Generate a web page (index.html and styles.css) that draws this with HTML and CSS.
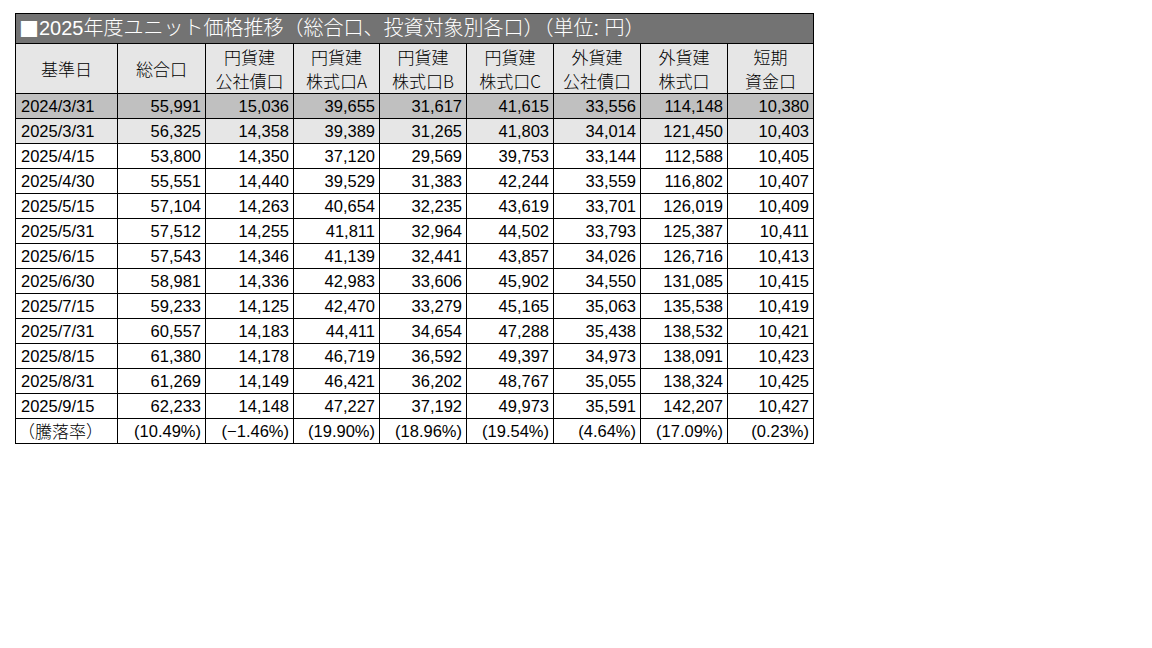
FILE: index.html
```html
<!DOCTYPE html>
<html lang="ja">
<head>
<meta charset="utf-8">
<title>2025年度ユニット価格推移</title>
<link rel="stylesheet" href="styles.css">
</head>
<body>
<div class="wrap">
<table class="tbl">
<colgroup>
<col class="c1"><col class="c2"><col class="c3"><col class="c4"><col class="c5"><col class="c6"><col class="c7"><col class="c8"><col class="c9">
</colgroup>
<thead>
<tr class="title-row"><th colspan="9" class="title"><span class="sq">■</span>2025年度ユニット価格推移（総合口、投資対象別各口）（単位: 円）</th></tr>
<tr class="head-row">
<th>基準日</th><th>総合口</th><th>円貨建<br>公社債口</th><th>円貨建<br>株式口A</th><th>円貨建<br>株式口B</th><th>円貨建<br>株式口C</th><th>外貨建<br>公社債口</th><th>外貨建<br>株式口</th><th>短期<br>資金口</th>
</tr>
</thead>
<tbody>
<tr class="base"><td class="d">2024/3/31</td><td>55,991</td><td>15,036</td><td>39,655</td><td>31,617</td><td>41,615</td><td>33,556</td><td>114,148</td><td>10,380</td></tr>
<tr class="prev"><td class="d">2025/3/31</td><td>56,325</td><td>14,358</td><td>39,389</td><td>31,265</td><td>41,803</td><td>34,014</td><td>121,450</td><td>10,403</td></tr>
<tr><td class="d">2025/4/15</td><td>53,800</td><td>14,350</td><td>37,120</td><td>29,569</td><td>39,753</td><td>33,144</td><td>112,588</td><td>10,405</td></tr>
<tr><td class="d">2025/4/30</td><td>55,551</td><td>14,440</td><td>39,529</td><td>31,383</td><td>42,244</td><td>33,559</td><td>116,802</td><td>10,407</td></tr>
<tr><td class="d">2025/5/15</td><td>57,104</td><td>14,263</td><td>40,654</td><td>32,235</td><td>43,619</td><td>33,701</td><td>126,019</td><td>10,409</td></tr>
<tr><td class="d">2025/5/31</td><td>57,512</td><td>14,255</td><td>41,811</td><td>32,964</td><td>44,502</td><td>33,793</td><td>125,387</td><td>10,411</td></tr>
<tr><td class="d">2025/6/15</td><td>57,543</td><td>14,346</td><td>41,139</td><td>32,441</td><td>43,857</td><td>34,026</td><td>126,716</td><td>10,413</td></tr>
<tr><td class="d">2025/6/30</td><td>58,981</td><td>14,336</td><td>42,983</td><td>33,606</td><td>45,902</td><td>34,550</td><td>131,085</td><td>10,415</td></tr>
<tr><td class="d">2025/7/15</td><td>59,233</td><td>14,125</td><td>42,470</td><td>33,279</td><td>45,165</td><td>35,063</td><td>135,538</td><td>10,419</td></tr>
<tr><td class="d">2025/7/31</td><td>60,557</td><td>14,183</td><td>44,411</td><td>34,654</td><td>47,288</td><td>35,438</td><td>138,532</td><td>10,421</td></tr>
<tr><td class="d">2025/8/15</td><td>61,380</td><td>14,178</td><td>46,719</td><td>36,592</td><td>49,397</td><td>34,973</td><td>138,091</td><td>10,423</td></tr>
<tr><td class="d">2025/8/31</td><td>61,269</td><td>14,149</td><td>46,421</td><td>36,202</td><td>48,767</td><td>35,055</td><td>138,324</td><td>10,425</td></tr>
<tr><td class="d">2025/9/15</td><td>62,233</td><td>14,148</td><td>47,227</td><td>37,192</td><td>49,973</td><td>35,591</td><td>142,207</td><td>10,427</td></tr>
<tr class="rate"><td class="d">（騰落率）</td><td>(10.49%)</td><td>(−1.46%)</td><td>(19.90%)</td><td>(18.96%)</td><td>(19.54%)</td><td>(4.64%)</td><td>(17.09%)</td><td>(0.23%)</td></tr>
</tbody>
</table>
</div>
</body>
</html>
```
FILE: styles.css
```css
html, body {
  margin: 0;
  padding: 0;
  background: #ffffff;
}

.wrap {
  padding: 13px 0 0 15px;
}

.tbl {
  border-collapse: collapse;
  table-layout: fixed;
  width: 799px;
  font-family: "Liberation Sans", "Noto Sans CJK JP", sans-serif;
  font-size: 16.5px;
  color: #000;
}

.c1 { width: 102px; }
.c2 { width: 88px; }
.c3 { width: 88px; }
.c4 { width: 86px; }
.c5 { width: 87px; }
.c6 { width: 87px; }
.c7 { width: 87px; }
.c8 { width: 87px; }
.c9 { width: 86px; }

.tbl th,
.tbl td {
  border: 1px solid #000;
  padding: 0;
  white-space: nowrap;
  overflow: hidden;
}

.title {
  background: #737373;
  color: #fff;
  text-align: left;
  font-family: "Liberation Sans", "Noto Sans CJK JP", sans-serif;
  font-weight: 300;
  font-size: 20px;
  line-height: 29px;
  padding-left: 3px !important;
  letter-spacing: 0;
}

.title .sq {
  font-family: "Noto Sans CJK JP", sans-serif;
  font-size: 20px;
  line-height: 1;
  vertical-align: top;
  display: inline-block;
  margin-top: 5px;
}

.head-row th {
  background: #e6e6e6;
  font-family: "Noto Sans CJK JP", sans-serif;
  font-weight: 300;
  font-size: 17px;
  line-height: 24px;
  padding-top: 1px;
  text-align: center;
}

.tbl td {
  line-height: 24px;
  text-align: right;
  padding-right: 4px;
}

.tbl td.d {
  text-align: left;
  padding-left: 5px;
  padding-right: 0;
}

.rate td.d {
  font-family: "Noto Sans CJK JP", sans-serif;
  font-weight: 300;
  font-size: 17px;
  padding-left: 2px;
}

.base td {
  background: #c0c0c0;
}

.prev td {
  background: #e6e6e6;
}
```
